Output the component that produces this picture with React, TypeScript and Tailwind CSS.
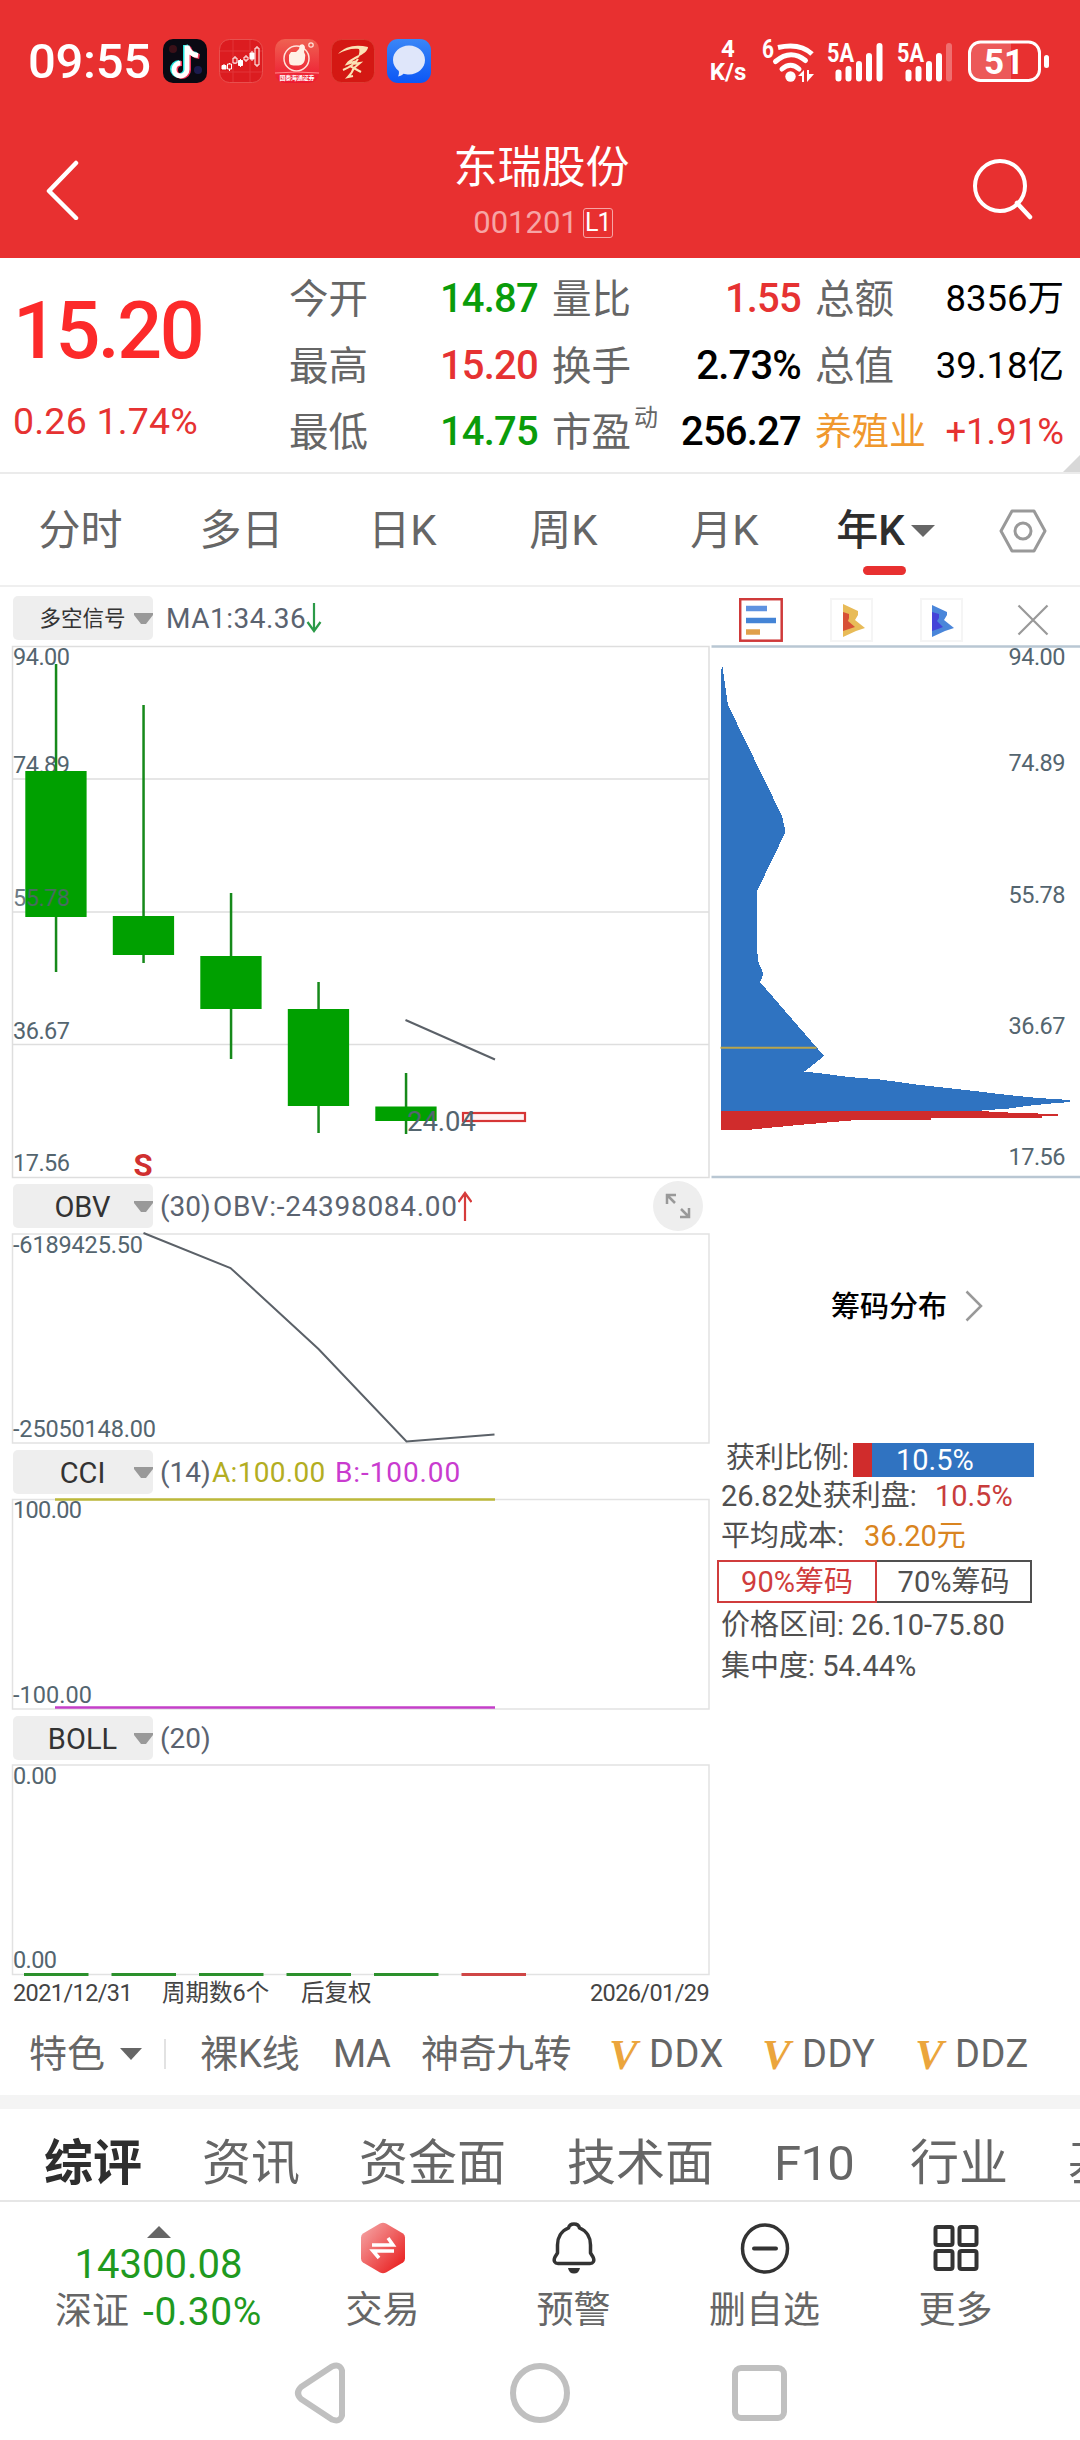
import React from 'react';

interface Candle {
  x: number;
  high: number;
  low: number;
  top: number;
  bottom: number;
}

interface AxisLabel {
  text: string;
  y: number;
  width: number;
}

const PERIODS = ['分时', '多日', '日K', '周K', '月K'];

// body and wick positions, in chart pixels
const CANDLES: Candle[] = [
  { x: 56, high: 664, low: 972, top: 771, bottom: 917 },
  { x: 143.5, high: 705, low: 963, top: 916, bottom: 955 },
  { x: 231, high: 893, low: 1059, top: 956, bottom: 1009 },
  { x: 318.5, high: 982, low: 1133, top: 1009, bottom: 1106 },
  { x: 406, high: 1073, low: 1134, top: 1106.5, bottom: 1121 },
];

const PRICE_LABELS: AxisLabel[] = [
  { text: '94.00', y: 656, width: 57 },
  { text: '74.89', y: 764, width: 57 },
  { text: '36.67', y: 1030, width: 57 },
  { text: '17.56', y: 1162, width: 57 },
];

const CHIP_LABELS: AxisLabel[] = [
  { text: '94.00', y: 656, width: 57 },
  { text: '74.89', y: 762, width: 57 },
  { text: '55.78', y: 894, width: 57 },
  { text: '36.67', y: 1025, width: 57 },
  { text: '17.56', y: 1156, width: 57 },
];

const StatusBar: React.FC = () => (
  <div className="flex h-[122px] items-center pl-[28px] text-white">
    <span className="w-[135px] text-[49px] leading-none font-medium tracking-[-.3px]">09:55</span>
    <div className="flex gap-[12px]">
      <svg className="h-[44px] w-[44px]" viewBox="0 0 44 44">
        <rect width="44" height="44" rx="10" fill="#0a0913" />
        <circle cx="10" cy="10" r="4" fill="#3a1018" />
        <circle cx="35" cy="31" r="4" fill="#1b1b4d" />
        <g fill="none" strokeWidth="5">
          <path d="M22.500 6v24a6.500 6.500 0 1 1-6.500-6.500M22.500 6c1 5 4 8.500 11 9.500" stroke="#25e6e0" />
          <path d="M25.500 8v23a6.500 6.500 0 1 1-6.500-6.500M25.500 8c1 5 4 8.500 11 9.500" stroke="#f4365c" />
          <path d="M24 6.500v24a6.500 6.500 0 1 1-6.500-6.500M24 7c1 5 4 8.500 11 9.500" stroke="#fff" />
        </g>
      </svg>
      <svg className="h-[44px] w-[44px]" viewBox="0 0 44 44">
        <rect x=".5" y=".5" width="43" height="43" rx="10" fill="#dc1c20" stroke="#e8504e" />
        <path d="M14 1v42M31 1v42M1 12h42M1 33h42" stroke="#e23438" />
        <g stroke="#fff" strokeWidth="1" fill="none">
          <path d="M5 25v5M10.500 24v8M16 17v8M21.500 20v8M27 16v7M33 12v10M38 7v21" />
          <path d="M3 26.500h4v3.500h-4zM19.500 21.500h4v5h-4zM31 14h4v6h-4z" fill="#fff" />
          <path d="M8.500 25h4v5h-4zM14 19h4v5h-4zM25 18h4v3h-4zM36 9h4v17h-4z" fill="#dc1c20" />
        </g>
      </svg>
      <svg className="h-[44px] w-[44px]" viewBox="0 0 44 44">
        <defs>
          <linearGradient id="fist" x1="0" y1="0" x2="0" y2="1">
            <stop offset="0" stopColor="#ef6252" />
            <stop offset="1" stopColor="#ee1730" />
          </linearGradient>
        </defs>
        <rect width="44" height="44" rx="10" fill="url(#fist)" />
        <circle cx="21.500" cy="19.500" r="12.500" fill="none" stroke="#ffe3da" strokeWidth="1.500" />
        <path d="M16 13h5l3-3 1-4q4-2 5 2l-1 5q2 3 1 6 0 5-4 7-5 1-10 0-2-1-2-4v-6z" fill="#fff1e6" />
        <circle cx="36" cy="6" r="2.200" fill="none" stroke="#ffe3da" strokeWidth="1.200" />
        <path d="M0 34q22-2 44 0" stroke="#ff8f8f" fill="none" />
        <text x="22" y="41" textAnchor="middle" fontSize="6" textLength="35" fill="#fff" fontWeight="bold">国泰海通证券</text>
      </svg>
      <svg className="h-[44px] w-[44px]" viewBox="0 0 44 44">
        <rect x=".5" y=".5" width="43" height="43" rx="10" fill="#d41813" stroke="#dd3b32" />
        <path d="M7 15C14 7 25 5 37 8c0 4-5 7-10 10 1-3 2-6 1-8-7-1-14 1-21 5z" fill="#fbe3b5" />
        <path d="M28 17c-4 2-10 5-12 8l10-3M27 20c-3 5-8 8-15 11M21 25l8-1-6 5M19 27l11 6M23 28c-1 4-3 7-6 10l5-1" fill="none" stroke="#fbe3b5" strokeWidth="2" />
      </svg>
      <svg className="h-[44px] w-[44px]" viewBox="0 0 44 44">
        <defs>
          <linearGradient id="msg" x1="0" y1="0" x2="0" y2="1">
            <stop offset="0" stopColor="#3a86f7" />
            <stop offset="1" stopColor="#0c57f5" />
          </linearGradient>
        </defs>
        <rect width="44" height="44" rx="11" fill="url(#msg)" />
        <path d="M22 6.500c9 0 16 6.500 16 14.500s-7 14.500-16 14.500c-2 0-4-.3-5.500-.8-1.500 1.500-3 2.300-5.500 2.800.8-1.500 1.200-3.500.8-5.500C8.200 29 6 25.500 6 21 6 13 13 6.500 22 6.500z" fill="#dfe6fa" />
      </svg>
    </div>
    <div className="ml-[275px] flex w-[44px] flex-col items-center text-[24px] leading-[23px] font-bold">
      <span>4</span>
      <span>K/s</span>
    </div>
    <svg className="ml-[10px] h-[44px] w-[290px] overflow-visible" viewBox="759 39 290 44" fill="#fff">
      <text x="761" y="58" fontSize="25" fontWeight="700" textLength="12" lengthAdjust="spacingAndGlyphs">6</text>
      <g fill="none" stroke="#fff" strokeWidth="5">
        <path d="M777 47.500q22-5 34 6.500" />
        <path d="M774.500 61.500q15-13 30-1" strokeLinecap="round" />
        <path d="M781 69q8.500-7.500 17 0" strokeLinecap="round" />
      </g>
      <circle cx="789.500" cy="76.500" r="5.200" />
      <path d="M797 76l6-6v12h-2v-6zM806 70v12l7-8h-5v-4z" />
      <text x="826" y="61.500" fontSize="26" fontWeight="700" textLength="27" lengthAdjust="spacingAndGlyphs">5A</text>
      <g stroke="#fff" strokeWidth="6" strokeLinecap="round">
        <path d="M837.500 72.500v6M847.500 69v9.500M858 64v14.500M868 56v22.500M878.500 46v32.500" />
        <path d="M907.500 72.500v6M917.500 69v9.500M928 64v14.500M938 56v22.500" />
        <path d="M948 46v32.500" opacity=".3" />
      </g>
      <text x="896" y="61.500" fontSize="26" fontWeight="700" textLength="27" lengthAdjust="spacingAndGlyphs">5A</text>
      <path d="M979 43h31v36h-31a9 9 0 0 1-9-9V52a9 9 0 0 1 9-9z" opacity=".2" />
      <rect x="968.500" y="42" width="70" height="38.500" rx="11" fill="none" stroke="#fff" strokeWidth="3" />
      <rect x="1043" y="55" width="5" height="13" rx="2.500" />
      <text x="1003" y="74" fontSize="35" fontWeight="700" textAnchor="middle">51</text>
    </svg>
  </div>
);

const TitleBar: React.FC = () => (
  <div className="flex h-[136px] items-center justify-between pr-[44px] pl-[46px] text-white">
    <svg className="h-[60px] w-[36px]" viewBox="0 0 36 60" fill="none" stroke="#fff" strokeWidth="4.500">
      <path d="M30 3L3 31l27 27" strokeLinecap="round" strokeLinejoin="round" />
    </svg>
    <div className="flex flex-col items-center pt-[4px] pl-[29px]">
      <h1 className="text-[44px] leading-[60px] font-normal">东瑞股份</h1>
      <div className="mt-[1px] flex items-center gap-[5px] pl-[3px]">
        <span className="text-[31px] leading-[48px] text-[#f6a5a5]">001201</span>
        <span className="flex h-[30px] w-[30px] items-center justify-center rounded-[3px] border border-[#f6a5a5] text-[25px] leading-none tracking-[-1px]">L1</span>
      </div>
    </div>
    <svg className="h-[64px] w-[64px]" viewBox="-1 0 64 64" fill="none" stroke="#fff" strokeWidth="4">
      <circle cx="27" cy="28" r="25" />
      <path d="M44 45l13 14" strokeLinecap="round" strokeWidth="4.500" />
    </svg>
  </div>
);

const Stat: React.FC<{ label: string; value: string; tone: string; sup?: string; labelTone?: string; small?: boolean }> = ({ label, value, tone, sup, labelTone = 'text-[#666]', small }) => (
  <div className="flex h-[66.500px] items-center justify-between">
    <span className={`${labelTone} ${small && label.length > 2 ? 'text-[37px]' : 'text-[39.500px]'} pt-[3px] leading-none whitespace-nowrap`}>
      {label}
      {sup && <sup className="relative -top-[20px] ml-[3px] align-baseline text-[24px] leading-none">{sup}</sup>}
    </span>
    <span className={`${tone} ${small ? 'text-[36.500px]' : 'text-[40px] font-medium tracking-[-.8px]'} pt-[2px] leading-none whitespace-nowrap`}>{value}</span>
  </div>
);

const Quote: React.FC = () => (
  <section className="relative flex h-[216px] border-b-2 border-[#ebebeb] pt-[7px]">
    <div className="w-[289px] pl-[13px]">
      <div className="mt-[21px] text-[79px] leading-[90px] font-medium tracking-[-2.500px] text-[#fc2a2a]">15.20</div>
      <div className="mt-[18px] text-[37.500px] leading-[54px] tracking-[.2px] text-[#e63232]">0.26 1.74%</div>
    </div>
    <div className="w-[249px]">
      <Stat label="今开" value="14.87" tone="text-[#0a9c0a]" />
      <Stat label="最高" value="15.20" tone="text-[#e63232]" />
      <Stat label="最低" value="14.75" tone="text-[#0a9c0a]" />
    </div>
    <div className="ml-[14px] w-[249px]">
      <Stat label="量比" value="1.55" tone="text-[#e63232]" />
      <Stat label="换手" value="2.73%" tone="text-black" />
      <Stat label="市盈" sup="动" value="256.27" tone="text-black" />
    </div>
    <div className="ml-[14px] w-[249px]">
      <Stat label="总额" value="8356万" tone="text-black" small />
      <Stat label="总值" value="39.18亿" tone="text-black" small />
      <Stat label="养殖业" value="+1.91%" tone="text-[#e63232]" labelTone="text-[#f0982e]" small />
    </div>
    <svg className="absolute right-0 bottom-0 h-[17px] w-[17px]" viewBox="0 0 17 17">
      <path d="M17 0v17H0z" fill="#d8d8d8" />
    </svg>
  </section>
);

const PeriodTabs: React.FC = () => (
  <nav className="flex h-[113px] items-center border-b-2 border-[#efefef] pt-[2px] text-[42px] leading-none text-[#666]">
    {PERIODS.map((p) => (
      <div key={p} className="w-[161px] text-center">{p}</div>
    ))}
    <div className="relative flex w-[161px] items-center justify-center gap-[6px] font-medium text-[#2e2e2e]">
      年K
      <svg className="h-[12px] w-[24px]" viewBox="0 0 24 12"><path d="M0 0h24L12 12z" fill="#666" /></svg>
      <span className="absolute -bottom-[23px] left-[58px] h-[9px] w-[43px] rounded-full bg-[#e83030]" />
    </div>
    <div className="flex flex-1 justify-center">
      <svg className="h-[44px] w-[48px]" viewBox="0 0 48 44" fill="none" stroke="#999" strokeWidth="3">
        <path d="M13 2h22l11 20-11 20H13L2 22z" strokeLinejoin="round" />
        <circle cx="24" cy="22" r="8" />
      </svg>
    </div>
  </nav>
);

const PaneHeader: React.FC<{ name: string; small?: boolean; children?: React.ReactNode }> = ({ name, small, children }) => (
  <div className="flex h-[56px] items-center pl-[13px] text-[28px] leading-none text-[#5b6370]">
    <div className="flex h-[44px] w-[140px] items-center justify-between rounded-[5px] bg-[#eee] pl-[23px] text-[#333]">
      <span className={`flex-1 pt-[2px] text-center whitespace-nowrap ${small ? 'text-[21.500px]' : 'text-[29px]'}`}>{name}</span>
      <svg className="ml-[5px] h-[11px] w-[19px]" viewBox="0 0 19 11"><path d="M0 0h19v2L12 11H7L0 2z" fill="#999" /></svg>
    </div>
    {children}
  </div>
);

const Axis: React.FC<{ labels: AxisLabel[]; x?: number }> = ({ labels, x = 13 }) => (
  <g fill="#54656f" fontSize="23.500">
    {labels.map((l) => (
      <text key={l.y} x={x} y={l.y + 8.5} textLength={l.width}>{l.text}</text>
    ))}
  </g>
);

const PriceChart: React.FC = () => (
  <svg className="block h-[532px] w-[711px] overflow-visible" viewBox="0 646 711 532">
    <g fill="none" stroke="#dedede" strokeWidth="1.500">
      <rect x="12.500" y="646.500" width="696.500" height="531" />
      <path d="M12 779h697M12 912h697M12 1044.500h697" />
    </g>
    <Axis labels={PRICE_LABELS} />
    {CANDLES.map((c) => (
      <g key={c.x} fill="#00a000">
        <rect x={c.x - 1.2} y={c.high} width="2.500" height={c.low - c.high} fill="#16891a" />
        <rect x={c.x - 30.7} y={c.top} width="61.300" height={c.bottom - c.top} />
      </g>
    ))}
    <text x="13" y="905.500" fontSize="23.500" fill="#54656f" opacity=".85" textLength="57">55.78</text>
    <rect x="463" y="1113" width="62" height="8" fill="#fff3f3" stroke="#d63636" strokeWidth="2.200" />
    <path d="M405.500 1020l89.500 39.500" stroke="#5b6168" strokeWidth="2" />
    <text x="407" y="1130.500" fontSize="27.500" fill="#54656f" textLength="69">24.04</text>
    <text x="143" y="1176" fontSize="31" fontWeight="700" fill="#d03030" textAnchor="middle">S</text>
  </svg>
);

const ObvChart: React.FC = () => (
  <svg className="block h-[210px] w-[711px] overflow-visible" viewBox="0 1234 711 210">
    <rect x="12.500" y="1234" width="696.500" height="209" fill="none" stroke="#e2e2e2" strokeWidth="1.500" />
    <Axis labels={[{ text: '-6189425.50', y: 1244.5, width: 130 }, { text: '-25050148.00', y: 1428.5, width: 143 }]} />
    <path d="M143.500 1233l87 35 88 81 88 92.500 88-7" fill="none" stroke="#5b6168" strokeWidth="2" />
  </svg>
);

const CciChart: React.FC = () => (
  <svg className="block h-[210px] w-[711px] overflow-visible" viewBox="0 1500 711 210">
    <rect x="12.500" y="1499.500" width="696.500" height="209.500" fill="none" stroke="#e2e2e2" strokeWidth="1.500" />
    <Axis labels={[{ text: '100.00', y: 1509.5, width: 69 }, { text: '-100.00', y: 1694, width: 79 }]} />
    <path d="M55 1499.500h440" stroke="#bcb93a" strokeWidth="2.500" />
    <path d="M55 1707.500h440" stroke="#c43fc9" strokeWidth="2.500" />
  </svg>
);

const BollChart: React.FC = () => (
  <svg className="block h-[210px] w-[711px] overflow-visible" viewBox="0 1766 711 210">
    <rect x="12.500" y="1765" width="696.500" height="209.500" fill="none" stroke="#e2e2e2" strokeWidth="1.500" />
    <Axis labels={[{ text: '0.00', y: 1775.5, width: 44 }, { text: '0.00', y: 1959.5, width: 44 }]} />
    <path d="M24 1974.500h64.500M111.500 1974.500H176M199 1974.500h64.500M286.500 1974.500H351M374 1974.500h64.500" stroke="#2c902c" strokeWidth="3" />
    <path d="M461.500 1974.500H526" stroke="#cf4646" strokeWidth="3" />
  </svg>
);

const ChipChart: React.FC = () => (
  <svg className="block h-[532px] w-[369px] overflow-visible" viewBox="711 646 369 532">
    <path d="M711.500 646.500H1080M711.500 1177H1080" stroke="#b9c7d3" strokeWidth="2.500" />
    <path
      d="M720.500 680L722 664 728 705 782 816 785.500 832 756.600 892 757.600 960 763.500 974 760 982 824 1056 804.500 1071.500 822 1073.500 849 1077 880 1079.500 920 1085 966 1090 1008 1095 1038 1098 1070 1100V1102L1051 1103.500 1026 1106 1009 1108.500 975 1111H720.500z"
      fill="#2f73c1"
      shapeRendering="crispEdges"
    />
    <path d="M720.500 1111H979L1018 1113 1058 1114V1116H1042V1118H931V1120H857L798 1125 747 1130H720.500z" fill="#d02c2c" shapeRendering="crispEdges" />
    <path d="M720.500 1047.800h96" stroke="#b9a54c" strokeWidth="2" />
    <Axis labels={CHIP_LABELS} x={1008.500} />
  </svg>
);

const ChipPanel: React.FC = () => (
  <aside className="w-[369px] text-[29px] leading-none text-[#505050]">
    <div className="flex h-[59px] items-center pt-[6px] pl-[28px]">
      <svg className="h-[44px] w-[44px]" viewBox="0 0 44 44">
        <rect x="1.200" y="1.200" width="41.500" height="41.500" fill="#fff" stroke="#cf3a3a" strokeWidth="2.500" />
        <path d="M7 10.500h21" stroke="#5e92e0" strokeWidth="5.500" />
        <path d="M7 22.500h30" stroke="#4484d6" strokeWidth="5.500" />
        <path d="M7 34h14" stroke="#e0a04a" strokeWidth="5.500" />
      </svg>
      <svg className="ml-[47px] h-[44px] w-[43px]" viewBox="0 0 43 44">
        <rect x="1" y="1" width="41" height="42" fill="none" stroke="#f5f5f5" strokeWidth="2" />
        <path d="M13 6l15 7v4l-3 5 10 8-9 3-13 6z" fill="#e8bb58" />
        <path d="M13 14l6 2v4l-1 3 7 6-6 2-6 2z" fill="#d75036" />
      </svg>
      <svg className="ml-[47px] h-[44px] w-[43px]" viewBox="0 0 43 44">
        <rect x="1" y="1" width="41" height="42" fill="none" stroke="#f5f5f5" strokeWidth="2" />
        <path d="M12 7l15 7v3l-3 5 10 8-9 3-13 6z" fill="#4a86da" />
        <path d="M12 14l7 2v4l-2 3 6 6-5 2-6 2z" fill="#4443d8" />
      </svg>
      <svg className="ml-[54px] h-[32px] w-[32px]" viewBox="0 0 32 32" stroke="#999" strokeWidth="2.200">
        <path d="M1.500 1.500l29 29M30.500 1.500l-29 29" />
      </svg>
    </div>
    <ChipChart />
    <div className="flex h-[256px] items-center gap-[18px] pl-[120px] font-medium text-black">
      <span className="pt-[3px]">筹码分布</span>
      <svg className="h-[32px] w-[18px]" viewBox="0 0 18 32" fill="none" stroke="#999" strokeWidth="2.500">
        <path d="M1.500 1.500L16 16 1.500 30.500" />
      </svg>
    </div>
    <div className="flex h-[41px] items-center pl-[15px]">
      <span className="w-[127px] pt-[8px]">获利比例:</span>
      <div className="mt-[11px] flex h-[34px] w-[181px] bg-[#3073c1]">
        <span className="w-[19px] bg-[#d02c2c]" />
        <span className="pt-[2px] pl-[24px] leading-[30px] text-white">10.5%</span>
      </div>
    </div>
    <div className="flex h-[40px] items-center pt-[3px] pl-[10px]">
      26.82处获利盘:<span className="pl-[18px]  text-[#c83c3c]">10.5%</span>
    </div>
    <div className="flex h-[39px] items-center pt-[3px] pl-[10px]">
      平均成本:<span className="pl-[20px] text-[#d98420]">36.20元</span>
    </div>
    <div className="mt-[6px] ml-[6px] flex h-[43px] w-[315px] text-center leading-[41px]">
      <span className="w-[160px] border-[2.500px] border-[#d03c3c] text-[#d03c3c]">90%筹码</span>
      <span className="flex-1 border-[2.500px] border-l-0 border-[#505050]">70%筹码</span>
    </div>
    <div className="flex h-[41px] items-center pt-[3px] pl-[10px]">价格区间: 26.10-75.80</div>
    <div className="flex h-[41px] items-center pt-[3px] pl-[10px]">集中度: 54.44%</div>
  </aside>
);

const Charts: React.FC = () => (
  <div className="flex h-[1424px]">
    <div className="w-[711px]">
      <div className="pt-[3px]">
        <PaneHeader name="多空信号" small>
          <span className="ml-[13px] pt-[2px] tracking-[.5px]">MA1:34.36</span>
          <svg className="h-[32px] w-[16px]" viewBox="0 0 16 32" fill="none" stroke="#2b9a48" strokeWidth="2.200">
            <path d="M8 1v28M1.500 20L8 29l6.500-9" />
          </svg>
        </PaneHeader>
      </div>
      <PriceChart />
      <PaneHeader name="OBV">
        <span className="ml-[7px] w-[53px] pt-[2px]">(30)</span>
        <span className="pt-[2px] tracking-[.7px]">OBV:-24398084.00</span>
        <svg className="h-[32px] w-[14px]" viewBox="1 0 14 32" fill="none" stroke="#d63c3c" strokeWidth="2.200">
          <path d="M8 31V3M1.500 12L8 3l6.500 9" />
        </svg>
        <span className="mr-[8px] ml-auto flex h-[50px] w-[50px] items-center justify-center rounded-full bg-[#eee]">
          <svg className="h-[26px] w-[26px]" viewBox="0 0 26 26" fill="none" stroke="#999" strokeWidth="2.500">
            <path d="M2 11V2h9M2 2l8 8M24 15v9h-9M24 24l-8-8" />
          </svg>
        </span>
      </PaneHeader>
      <ObvChart />
      <PaneHeader name="CCI">
        <span className="ml-[7px] w-[52px] pt-[2px]">(14)</span>
        <span className="w-[123px] pt-[2px] tracking-[.3px] text-[#b3ad22]">A:100.00</span>
        <span className="pt-[2px] tracking-[.9px] text-[#c93bcf]">B:-100.00</span>
      </PaneHeader>
      <CciChart />
      <PaneHeader name="BOLL">
        <span className="ml-[7px] pt-[2px]">(20)</span>
      </PaneHeader>
      <BollChart />
      <div className="flex h-[34px] items-center pt-[2px] pr-[2px] pl-[13px] text-[23.500px] leading-none text-[#444]">
        <span className="w-[149px] tracking-[-.6px]">2021/12/31</span>
        <span className="w-[139px]">周期数6个</span>
        <span>后复权</span>
        <span className="ml-auto tracking-[-.6px]">2026/01/29</span>
      </div>
    </div>
    <ChipPanel />
  </div>
);

const VipItem: React.FC<{ name: string }> = ({ name }) => (
  <span className="flex w-[153px] items-center">
    <span className="w-[40px] font-['Liberation_Serif',serif] text-[43px] leading-none font-bold text-[#eba53c] italic">V</span>
    <span className="tracking-[.5px]">{name}</span>
  </span>
);

const FeatureBar: React.FC = () => (
  <div className="flex h-[84px] items-center pt-[2px] pl-[29px] text-[38px] leading-none text-[#666]">
    <span className="w-[91px]">特色</span>
    <svg className="h-[12px] w-[22px]" viewBox="0 0 22 12"><path d="M0 0h22L11 12z" fill="#666" /></svg>
    <span className="ml-[22px] h-[30px] w-[2px] bg-[#e2e2e2]" />
    <span className="ml-[34px] w-[133px]">裸K线</span>
    <span className="w-[88px] tracking-[-.5px]">MA</span>
    <span className="w-[188px] tracking-[-.5px]">神奇九转</span>
    <VipItem name="DDX" />
    <VipItem name="DDY" />
    <VipItem name="DDZ" />
  </div>
);

const InfoTabs: React.FC = () => (
  <nav className="flex h-[93px] items-center overflow-hidden border-b-2 border-[#e6e6e6] pt-[19px] pl-[44px] text-[49px] leading-[60px] whitespace-nowrap text-[#666]">
    <span className="w-[158px] shrink-0 font-bold text-[#2e2e2e]">综评</span>
    <span className="w-[157px] shrink-0">资讯</span>
    <span className="w-[208px] shrink-0">资金面</span>
    <span className="w-[207px] shrink-0">技术面</span>
    <span className="w-[136px] shrink-0 tracking-[-.7px]">F10</span>
    <span className="w-[158px] shrink-0">行业</span>
    <span>基本面</span>
  </nav>
);

const Action: React.FC<{ name: string; children: React.ReactNode }> = ({ name, children }) => (
  <div className="flex w-[191px] flex-col items-center text-[37px] leading-none text-[#666]">
    <div className="flex h-[52px] items-center">{children}</div>
    <span className="mt-[18px]">{name}</span>
  </div>
);

const ActionBar: React.FC = () => (
  <div className="flex h-[138px] pt-[20px] pl-[30px]">
    <div className="flex w-[257px] flex-col items-center">
      <svg className="mt-[4px] h-[12px] w-[24px]" viewBox="0 0 24 12"><path d="M12 0l12 12H0z" fill="#666" /></svg>
      <span className="mt-[6px] text-[40px] leading-[42px] text-[#1f9a1f]">14300.08</span>
      <span className="mt-[2px] flex gap-[14px] text-[37px] leading-[48px] text-[#666]">
        深证<span className="text-[39px] tracking-[.6px] text-[#1f9a1f]">-0.30%</span>
      </span>
    </div>
    <Action name="交易">
      <svg className="h-[52px] w-[46px]" viewBox="0 0 46 52">
        <defs>
          <linearGradient id="trade" x1="0" y1="0" x2="1" y2="1">
            <stop offset=".1" stopColor="#f49c9c" />
            <stop offset=".85" stopColor="#ea2a2a" />
          </linearGradient>
        </defs>
        <path d="M20 1.500q3-1.500 6 0l17 10q2 1.500 2 4v21q0 2.500-2 4l-17 10q-3 1.500-6 0L3 40.500q-2-1.500-2-4v-21q0-2.500 2-4z" fill="url(#trade)" />
        <path d="M12 23h21L28 16M34 29H13l6 7" fill="none" stroke="#fff" strokeWidth="3.500" />
      </svg>
    </Action>
    <Action name="预警">
      <svg className="h-[52px] w-[44px]" viewBox="0 0 44 52" fill="none" stroke="#333" strokeWidth="3.500">
        <path d="M22 2c-3 0-5 2-5.500 4C9 9 5.500 16 5.500 23v8L3 35c-2 4 0 6.500 3 6.500h32c3 0 5-2.500 3-6.500l-2.500-4v-8c0-7-3.500-14-11-17C27 4 25 2 22 2z" strokeLinejoin="round" />
        <path d="M16 46h12q-1 5.500-6 5.500T16 46z" fill="#333" stroke="none" />
      </svg>
    </Action>
    <Action name="删自选">
      <svg className="h-[52px] w-[50px]" viewBox="0 0 50 52" fill="none" stroke="#333" strokeWidth="3.500">
        <ellipse cx="25" cy="26.500" rx="22.500" ry="23.500" />
        <path d="M14 26.500h22" strokeWidth="4" strokeLinecap="round" />
      </svg>
    </Action>
    <Action name="更多">
      <svg className="h-[52px] w-[46px]" viewBox="0 0 46 52" fill="none" stroke="#333" strokeWidth="4">
        <rect x="2.500" y="5" width="17" height="18" rx="2" />
        <rect x="26.500" y="5" width="17" height="18" rx="2" />
        <rect x="2.500" y="29" width="17" height="18" rx="2" />
        <rect x="26.500" y="29" width="17" height="18" rx="2" />
      </svg>
    </Action>
  </div>
);

const SystemNav: React.FC = () => (
  <div className="flex h-[100px] items-center pt-[6px] pl-[293px]">
    <svg className="h-[64px] w-[54px]" viewBox="0 0 54 64" fill="none" stroke="#c0c0c0" strokeWidth="6">
      <path d="M39 5.500L8 26q-6 6 0 12l31 20.500q8 3 10-4v-45q-2-7-10-4z" strokeLinejoin="round" />
    </svg>
    <span className="ml-[163px] h-[60px] w-[60px] rounded-full border-6 border-[#c0c0c0]" />
    <span className="ml-[162px] h-[56px] w-[55px] rounded-[9px] border-6 border-[#c0c0c0]" />
  </div>
);

const App: React.FC = () => (
  <div className="h-[2440px] w-[1080px] overflow-hidden bg-white font-['Roboto','Noto_Sans_CJK_SC',sans-serif]">
    <header className="h-[258px] bg-[#e83030]">
      <StatusBar />
      <TitleBar />
    </header>
    <Quote />
    <PeriodTabs />
    <Charts />
    <FeatureBar />
    <div className="h-[14px] bg-[#f4f4f4]" />
    <InfoTabs />
    <ActionBar />
    <SystemNav />
  </div>
);

export default App;
